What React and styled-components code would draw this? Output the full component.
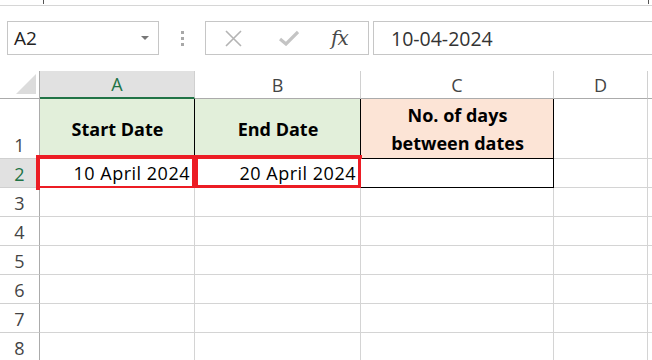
import styled, { createGlobalStyle } from "styled-components";

const GlobalStyle = createGlobalStyle`
  html, body {
    margin: 0;
    padding: 0;
    background: #ffffff;
  }
  body {
    width: 652px;
    height: 360px;
    overflow: hidden;
    font-family: "Open Sans", "Noto Sans", sans-serif;
  }
`;

const Page = styled.div`
  width: 652px;
  height: 360px;
  overflow: hidden;
  background: #fff;
`;

const TopStrip = styled.div`
  height: 5px;
  border-bottom: 1px solid #d6d6d6;
  overflow: hidden;
  position: relative;
`;

const Descender = styled.span`
  position: absolute;
  top: 0;
  left: ${(p) => p.x}px;
  width: 1px;
  height: 4px;
  background: #555;
`;

const Toolbar = styled.div`
  display: flex;
  align-items: center;
  height: 34px;
  margin-top: 15px;
  padding-left: 7px;
`;

const NameBox = styled.div`
  box-sizing: border-box;
  width: 152px;
  height: 34px;
  border: 1px solid #c6c6c6;
  display: flex;
  align-items: center;
  justify-content: space-between;
  padding: 0 9px 0 6px;
  font-size: 19px;
  color: #222;
`;

const Caret = styled.span`
  width: 0;
  height: 0;
  border-left: 4px solid transparent;
  border-right: 4px solid transparent;
  border-top: 4px solid #777;
`;

const Dots = styled.div`
  width: 46px;
  display: flex;
  flex-direction: column;
  align-items: center;
  gap: 3px;
  span {
    width: 3px;
    height: 3px;
    background: #a8a8a8;
  }
`;

const ButtonBox = styled.div`
  box-sizing: border-box;
  width: 164px;
  height: 34px;
  border: 1px solid #c6c6c6;
  display: flex;
  align-items: center;
  padding-left: 19px;
`;

const IconSlot = styled.div`
  width: ${(p) => p.w}px;
  display: flex;
  align-items: center;
`;

const Fx = styled.span`
  font-family: "DejaVu Serif", "Liberation Serif", serif;
  font-style: italic;
  font-size: 20px;
  color: #4a4a4a;
  letter-spacing: -1px;
`;

const FormulaBox = styled.div`
  box-sizing: border-box;
  flex: 1;
  height: 34px;
  margin-left: 4px;
  border: 1px solid #c6c6c6;
  border-right: none;
  display: flex;
  align-items: center;
  padding-left: 17px;
  font-size: 19.5px;
  color: #333;
`;

const Sheet = styled.div`
  margin-top: 16px;
  display: grid;
  grid-template-columns: 40px 155px 166px 193px 94px 1fr;
  grid-template-rows: 28px 60px 29px repeat(6, 29px);
`;

const ColHead = styled.div`
  box-sizing: border-box;
  display: flex;
  align-items: center;
  justify-content: center;
  font-size: 18px;
  color: ${(p) => (p.active ? "#217346" : "#444")};
  background: ${(p) => (p.active ? "#e1e1e1" : "#fff")};
  border-right: 1px solid #d0d0d0;
  border-bottom: ${(p) => (p.active ? "2px solid #217346" : "1px solid #ababab")};
`;

const Corner = styled.div`
  box-sizing: border-box;
  position: relative;
  border-right: 1px solid #ababab;
  border-bottom: 1px solid #ababab;
  &::after {
    content: "";
    position: absolute;
    right: 3px;
    bottom: 4px;
    width: 0;
    height: 0;
    border-left: 20px solid transparent;
    border-bottom: 20px solid #dcdcdc;
  }
`;

const RowHead = styled.div`
  box-sizing: border-box;
  display: flex;
  align-items: flex-end;
  justify-content: center;
  padding-bottom: 1px;
  font-size: 18px;
  color: ${(p) => (p.active ? "#217346" : "#444")};
  background: ${(p) => (p.active ? "#e1e1e1" : "#fff")};
  border-right: 1px solid #ababab;
  border-bottom: 1px solid #d0d0d0;
`;

const Cell = styled.div`
  box-sizing: border-box;
  position: relative;
  display: flex;
  flex-direction: column;
  align-items: ${(p) => (p.right ? "flex-end" : "center")};
  justify-content: center;
  padding: 0 4px 0 5px;
  font-size: 18px;
  line-height: 28px;
  letter-spacing: ${(p) => (p.right ? "0.5px" : "0")};
  color: #000;
  white-space: nowrap;
  font-weight: ${(p) => (p.bold ? 700 : 400)};
  background: ${(p) => p.bg || "#fff"};
  border-right: 1px solid ${(p) => (p.boxed ? "#000" : "#d4d4d4")};
  border-bottom: 1px solid ${(p) => (p.boxed ? "#000" : "#d4d4d4")};
`;

const RedBox = styled.div`
  position: absolute;
  top: -4px;
  bottom: ${(p) => p.b}px;
  left: ${(p) => p.l}px;
  right: -2px;
  border: 4px solid #ec1c24;
  pointer-events: none;
`;

const cols = ["A", "B", "C", "D", ""];

export default function App() {
  const emptyRows = [3, 4, 5, 6, 7, 8];
  return (
    <Page>
      <GlobalStyle />
      <TopStrip>
        <Descender x={43} />
        <Descender x={648} />
      </TopStrip>
      <Toolbar>
        <NameBox>
          A2
          <Caret />
        </NameBox>
        <Dots>
          <span />
          <span />
          <span />
        </Dots>
        <ButtonBox>
          <IconSlot w={54}>
            <svg width="17" height="17" viewBox="0 0 17 17">
              <path d="M1 1 L16 16 M16 1 L1 16" stroke="#b4b4b4" strokeWidth="1.6" fill="none" />
            </svg>
          </IconSlot>
          <IconSlot w={52}>
            <svg width="20" height="16" viewBox="0 0 20 16">
              <path d="M1 9 L7 14 L19 2" stroke="#c4c4c4" strokeWidth="3.2" fill="none" />
            </svg>
          </IconSlot>
          <IconSlot w={30}>
            <Fx>fx</Fx>
          </IconSlot>
        </ButtonBox>
        <FormulaBox>10-04-2024</FormulaBox>
      </Toolbar>
      <Sheet>
        <Corner />
        {cols.map((c, i) => (
          <ColHead key={i} active={c === "A"}>
            {c}
          </ColHead>
        ))}

        <RowHead>1</RowHead>
        <Cell bold boxed bg="#e2efda">Start Date</Cell>
        <Cell bold boxed bg="#e2efda">End Date</Cell>
        <Cell bold boxed bg="#fce4d6">
          <span>No. of days</span>
          <span>between dates</span>
        </Cell>
        <Cell />
        <Cell />

        <RowHead active>2</RowHead>
        <Cell right boxed>
          10 April 2024
          <RedBox l={-4} b={-3} />
        </Cell>
        <Cell right boxed>
          20 April 2024
          <RedBox l={-1} b={-2} />
        </Cell>
        <Cell boxed />
        <Cell />
        <Cell />

        {emptyRows.map((r) => (
          <>
            <RowHead key={"h" + r}>{r}</RowHead>
            <Cell key={"a" + r} />
            <Cell key={"b" + r} />
            <Cell key={"c" + r} />
            <Cell key={"d" + r} />
            <Cell key={"e" + r} />
          </>
        ))}
      </Sheet>
    </Page>
  );
}
